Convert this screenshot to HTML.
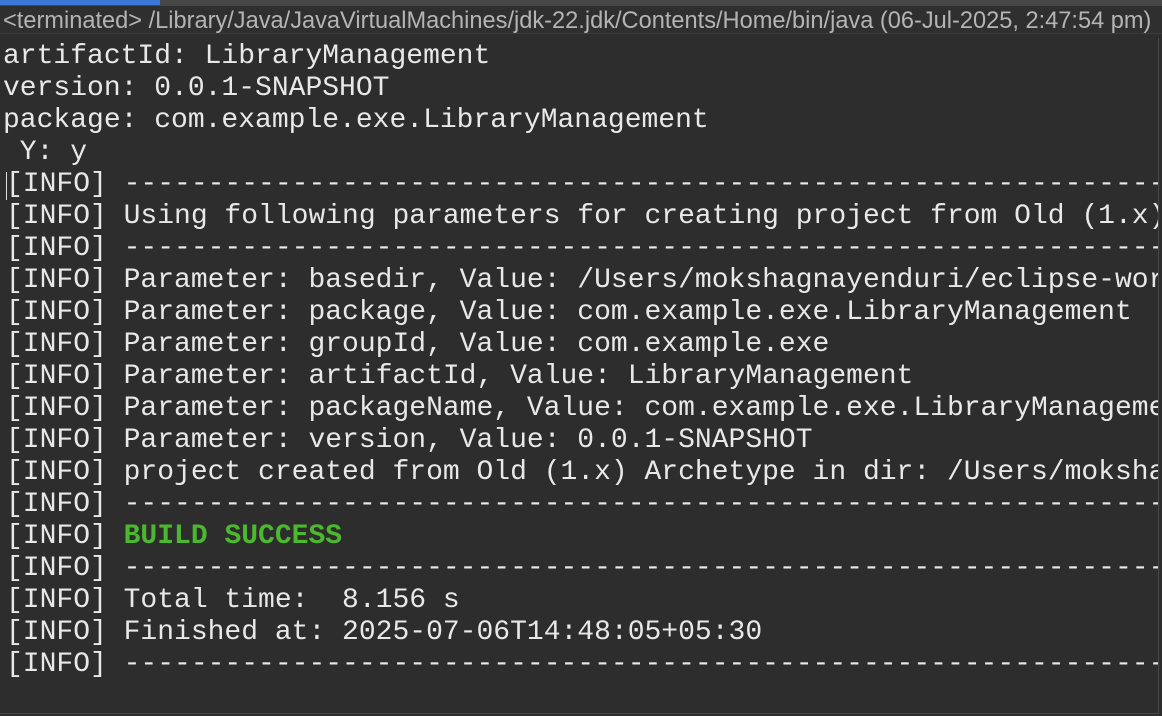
<!DOCTYPE html>
<html><head><style>
html,body{margin:0;padding:0;width:1162px;height:716px;overflow:hidden;background:#2d2d2d}
.top{position:absolute;left:0;top:0;width:1162px;height:6px;background:#474747}
.top .b{position:absolute;left:0;top:0;width:160px;height:5px;background:#3d78d8}
.hdr{position:absolute;left:0;top:6px;width:1162px;height:28px;background:#2f2f2f;border-bottom:1px solid #3c3c3c;color:#b4b4b4;font:23.6px "Liberation Sans",sans-serif;line-height:30px;padding-left:3px;white-space:nowrap;overflow:hidden;box-sizing:border-box}
.con{position:absolute;left:0;top:38px;width:1158px;height:675px;overflow:hidden;border-right:1px solid #474747;border-bottom:1px solid #474747;background:#2d2d2d}
pre{margin:0;padding:3px 0 0 3px;font:28px/32px "Liberation Mono",monospace;color:#e8e8e8;white-space:pre}
.i{padding-left:3px}
.g{color:#4bb82d;font-weight:bold}
.cur{position:absolute;left:6px;top:134px;width:1px;height:28px;background:#ddd}
</style></head><body>
<div class="top"><div class="b"></div></div>
<div class="hdr">&lt;terminated&gt; /Library/Java/JavaVirtualMachines/jdk-22.jdk/Contents/Home/bin/java (06-Jul-2025, 2:47:54 pm)</div>
<div class="con"><div class="cur"></div><pre>artifactId: LibraryManagement
version: 0.0.1-SNAPSHOT
package: com.example.exe.LibraryManagement
 Y: y
<span class="i">[INFO] ------------------------------------------------------------------------</span>
<span class="i">[INFO] Using following parameters for creating project from Old (1.x) Archetype: maven-archetype-quickstart:1.4</span>
<span class="i">[INFO] ------------------------------------------------------------------------</span>
<span class="i">[INFO] Parameter: basedir, Value: /Users/mokshagnayenduri/eclipse-workspace</span>
<span class="i">[INFO] Parameter: package, Value: com.example.exe.LibraryManagement</span>
<span class="i">[INFO] Parameter: groupId, Value: com.example.exe</span>
<span class="i">[INFO] Parameter: artifactId, Value: LibraryManagement</span>
<span class="i">[INFO] Parameter: packageName, Value: com.example.exe.LibraryManagement</span>
<span class="i">[INFO] Parameter: version, Value: 0.0.1-SNAPSHOT</span>
<span class="i">[INFO] project created from Old (1.x) Archetype in dir: /Users/mokshagnayenduri/eclipse-workspace/LibraryManagement</span>
<span class="i">[INFO] ------------------------------------------------------------------------</span>
<span class="i">[INFO] <span class="g">BUILD SUCCESS</span></span>
<span class="i">[INFO] ------------------------------------------------------------------------</span>
<span class="i">[INFO] Total time:  8.156 s</span>
<span class="i">[INFO] Finished at: 2025-07-06T14:48:05+05:30</span>
<span class="i">[INFO] ------------------------------------------------------------------------</span>
</pre></div>
</body></html>
